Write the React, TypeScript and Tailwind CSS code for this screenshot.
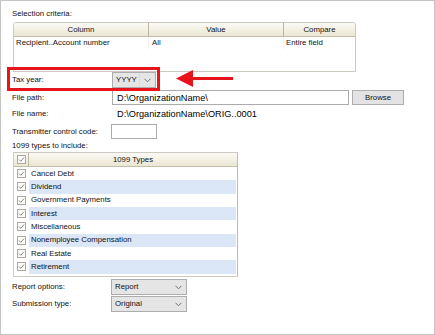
import React from "react";

const TYPES = [
  "Cancel Debt",
  "Dividend",
  "Government Payments",
  "Interest",
  "Miscellaneous",
  "Nonemployee Compensation",
  "Real Estate",
  "Retirement",
];

function Chevron() {
  return (
    <svg width="7" height="5" viewBox="0 0 7 5" className="shrink-0">
      <path d="M0.5 0.8 L3.5 3.8 L6.5 0.8" fill="none" stroke="#707070" strokeWidth="1" />
    </svg>
  );
}

function Dropdown({ value, width, sep }: { value: string; width: string; sep?: boolean }) {
  return (
    <div className={`${width} h-[16px] flex items-center bg-[#e5e5e5] border border-[#adadad] pl-[3px] pr-[4px]`}>
      <span className="flex-1">{value}</span>
      {sep && <span className="w-px h-[12px] bg-[#dadada] mr-[4px]" />}
      <Chevron />
    </div>
  );
}

function Check() {
  return (
    <div className="w-[9px] h-[9px] border border-[#aca89e] bg-[#fcfcfb] flex items-center justify-center">
      <svg width="7" height="7" viewBox="0 0 7 7">
        <path d="M1 3.5 L2.8 5.3 L6 1.6" fill="none" stroke="#8a8782" strokeWidth="1" />
      </svg>
    </div>
  );
}

export default function App() {
  return (
    <div className="w-[435px] h-[335px] bg-white">
      <div className="relative w-full h-full border border-[#c4c4c4] pl-[11px] pt-[8px] text-[7.8px] leading-[10px] text-[#111] font-['Liberation_Sans',Arial,sans-serif]">
        <div className="h-[10px]">Selection criteria:</div>

        {/* selection criteria grid */}
        <div className="mt-[3px] ml-[1px] w-[343px] h-[50px] border border-[#cbc8bf] rounded-t-[3px] bg-white">
          <div className="h-[14px] flex border-b border-[#c3bda9] bg-gradient-to-b from-[#fbfaf5] to-[#ebe6d3] rounded-t-[2px]">
            <div className="w-[135px] border-r border-[#bdb6a0] flex items-center justify-center">Column</div>
            <div className="w-[135px] border-r border-[#bdb6a0] flex items-center justify-center">Value</div>
            <div className="flex-1 flex items-center justify-center">Compare</div>
          </div>
          <div className="h-[12px] flex leading-[12px]">
            <div className="w-[135px] pl-[2px] border-r border-[#f1f1f1]">Recipient..Account number</div>
            <div className="w-[135px] pl-[3px] border-r border-[#f1f1f1]">All</div>
            <div className="flex-1 pl-[2px]">Entire field</div>
          </div>
        </div>

        <div className="h-[16px] flex items-center">
          <div className="w-[99px]">Tax year:</div>
          <div className="ml-[1px]">
            <Dropdown value="YYYY" width="w-[44px]" sep />
          </div>
        </div>

        <div className="mt-[2px] h-[15px] flex items-center">
          <div className="w-[99px]">File path:</div>
          <div className="ml-[1px] w-[237px] h-[15px] border border-[#ababab] bg-white pl-[4px] flex items-center text-[9.2px] text-black">
            D:\OrganizationName\
          </div>
          <div className="ml-[3px] w-[52px] h-[15px] border border-[#adadad] bg-[#e3e3e3] flex items-center justify-center">
            Browse
          </div>
        </div>

        <div className="h-[17px] flex items-center">
          <div className="w-[99px]">File name:</div>
          <div className="pl-[6px] text-[9.2px] text-black">D:\OrganizationName\ORIG..0001</div>
        </div>

        <div className="mt-[2px] h-[15px] flex items-center">
          <div className="w-[99px]">Transmitter control code:</div>
          <div className="w-[46px] h-[15px] border border-[#ababab] bg-white" />
        </div>

        <div className="mt-[2px] h-[10px]">1099 types to include:</div>

        {/* 1099 types grid */}
        <div className="mt-[1px] ml-[1px] w-[225px] h-[125px] border border-[#cdcac2] border-r-[#bdbab3] bg-white overflow-hidden">
          <div className="h-[14px] flex border-b border-[#c3bda9] bg-gradient-to-b from-[#fbfaf5] to-[#ebe6d3]">
            <div className="w-[15px] border-r border-[#bdb6a0] flex items-center justify-center">
              <Check />
            </div>
            <div className="flex-1 flex items-center justify-center">1099 Types</div>
          </div>
          {TYPES.map((t, i) => (
            <div key={t} className="h-[13.333px] flex">
              <div className="w-[15px] flex items-center justify-center">
                <Check />
              </div>
              <div
                className={`flex-1 pl-[2px] flex items-center mr-[1px] ${
                  i % 2 === 1 ? "bg-[#dbe6f7]" : "bg-white"
                }`}
              >
                {t}
              </div>
            </div>
          ))}
        </div>

        <div className="mt-[2px] h-[16px] flex items-center">
          <div className="w-[99px]">Report options:</div>
          <Dropdown value="Report" width="w-[76px]" />
        </div>

        <div className="mt-[1px] h-[16px] flex items-center">
          <div className="w-[99px]">Submission type:</div>
          <Dropdown value="Original" width="w-[76px]" />
        </div>

        {/* callout */}
        <div className="absolute left-[6px] top-[66px] w-[153px] h-[24px] border-[3px] border-[#e8141b]" />
        <svg className="absolute left-[174px] top-[68px]" width="59" height="19" viewBox="0 0 59 19">
          <polygon points="1,9.5 18,1 18,18" fill="#e8141b" />
          <rect x="17" y="8" width="41" height="3" fill="#e8141b" />
        </svg>
      </div>
    </div>
  );
}
